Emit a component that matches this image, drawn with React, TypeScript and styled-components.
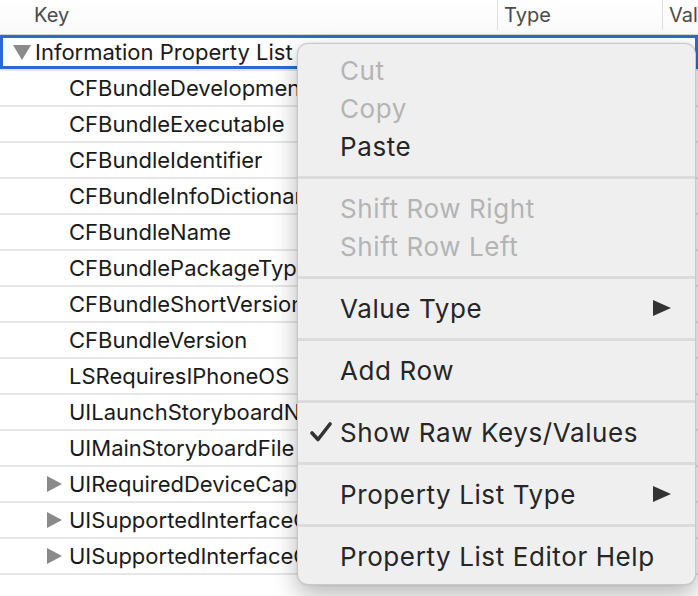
import React from "react";
import styled, { createGlobalStyle } from "styled-components";

const Global = createGlobalStyle`
  html, body {
    margin: 0;
    padding: 0;
    background: #ffffff;
    overflow: hidden;
  }
  body {
    font-family: Inter, "Noto Sans", "Liberation Sans", sans-serif;
  }
`;

const Window = styled.div`
  position: relative;
  width: 698px;
  height: 596px;
  overflow: hidden;
  background: #fff;
`;

const Header = styled.div`
  display: grid;
  grid-template-columns: 497px 165px 1fr;
  height: 34px;
  border-bottom: 1px solid #d6d6d6;
  background: linear-gradient(#ffffff, #fafafa);
`;

const HeaderCell = styled.div<{ $divider?: boolean }>`
  height: 30px;
  display: flex;
  align-items: center;
  padding-left: ${(p) => (p.$divider ? "6px" : "34px")};
  border-left: ${(p) => (p.$divider ? "1px solid #dedede" : "none")};
  font-size: 20px;
  color: #4a4a4a;
  white-space: nowrap;
  overflow: hidden;
`;

const Row = styled.div<{ $selected?: boolean }>`
  display: grid;
  grid-template-columns: 497px 165px 1fr;
  height: 34px;
  border-bottom: 2px solid #e6e6e6;
  box-shadow: ${(p) => (p.$selected ? "inset 0 0 0 3px #2c6ad2" : "none")};
  font-size: 22px;
  color: #1a1a1a;
`;

const KeyCell = styled.div<{ $indent: number }>`
  display: flex;
  align-items: center;
  padding-left: ${(p) => p.$indent}px;
  white-space: nowrap;
  overflow: hidden;
`;

const Cell = styled.div`
  display: flex;
  align-items: center;
  padding-left: 6px;
  white-space: nowrap;
  overflow: hidden;
`;

const Disclosure = styled.span`
  display: inline-flex;
  width: 22px;
  align-items: center;
`;

const Menu = styled.div`
  position: absolute;
  left: 297px;
  top: 43px;
  width: 397px;
  padding: 8px 0;
  background: #efefef;
  border: 1px solid #c9c9c9;
  border-radius: 11px;
  box-shadow: 0 10px 24px rgba(0, 0, 0, 0.28), 0 0 2px rgba(0, 0, 0, 0.15);
`;

const Item = styled.div<{ $disabled?: boolean }>`
  position: relative;
  display: flex;
  align-items: center;
  height: 36px;
  padding-bottom: 2px;
  padding-left: 42px;
  font-size: 26px;
  letter-spacing: 0.6px;
  color: ${(p) => (p.$disabled ? "#b4b4b4" : "#262626")};
  white-space: nowrap;
`;

const Separator = styled.div`
  height: 3px;
  margin: 10px 0 11px;
  background: #dcdcdc;
`;

const Check = styled.svg`
  position: absolute;
  left: 12px;
  top: 8px;
`;

const Arrow = styled.svg`
  position: absolute;
  right: 24px;
  top: 10px;
`;

const Down = () => (
  <svg width="18" height="15" viewBox="0 0 18 15">
    <polygon points="0,0 18,0 9,15" fill="#8a8a8a" />
  </svg>
);

const Right = () => (
  <svg width="15" height="16" viewBox="0 0 15 16">
    <polygon points="0,0 15,8 0,16" fill="#8a8a8a" />
  </svg>
);

type Entry = { key: string; expandable?: boolean };

const entries: Entry[] = [
  { key: "CFBundleDevelopmentRegion" },
  { key: "CFBundleExecutable" },
  { key: "CFBundleIdentifier" },
  { key: "CFBundleInfoDictionaryVersion" },
  { key: "CFBundleName" },
  { key: "CFBundlePackageType" },
  { key: "CFBundleShortVersionString" },
  { key: "CFBundleVersion" },
  { key: "LSRequiresIPhoneOS" },
  { key: "UILaunchStoryboardName" },
  { key: "UIMainStoryboardFile" },
  { key: "UIRequiredDeviceCapabilities", expandable: true },
  { key: "UISupportedInterfaceOrientations", expandable: true },
  { key: "UISupportedInterfaceOrientations~ipad", expandable: true },
];

type MenuEntry =
  | { sep: true }
  | { sep?: false; label: string; disabled?: boolean; checked?: boolean; submenu?: boolean };

const menu: MenuEntry[] = [
  { label: "Cut", disabled: true },
  { label: "Copy", disabled: true },
  { label: "Paste" },
  { sep: true },
  { label: "Shift Row Right", disabled: true },
  { label: "Shift Row Left", disabled: true },
  { sep: true },
  { label: "Value Type", submenu: true },
  { sep: true },
  { label: "Add Row" },
  { sep: true },
  { label: "Show Raw Keys/Values", checked: true },
  { sep: true },
  { label: "Property List Type", submenu: true },
  { sep: true },
  { label: "Property List Editor Help" },
];

const App = () => (
  <Window>
    <Global />
    <Header>
      <HeaderCell>Key</HeaderCell>
      <HeaderCell $divider>Type</HeaderCell>
      <HeaderCell $divider>Val</HeaderCell>
    </Header>
    <Row $selected>
      <KeyCell $indent={13}>
        <Disclosure>
          <Down />
        </Disclosure>
        Information Property List
      </KeyCell>
      <Cell>Dictionary</Cell>
      <Cell />
    </Row>
    {entries.map((e, idx) => (
      <Row key={idx}>
        <KeyCell $indent={e.expandable ? 47 : 69}>
          {e.expandable && (
            <Disclosure>
              <Right />
            </Disclosure>
          )}
          {e.key}
        </KeyCell>
        <Cell />
        <Cell />
      </Row>
    ))}

    <Menu>
      {menu.map((m, idx) =>
        m.sep ? (
          <Separator key={idx} />
        ) : (
          <Item key={idx} $disabled={m.disabled}>
            {m.checked && (
              <Check width="22" height="20" viewBox="0 0 22 20">
                <path
                  d="M2 11 L8 17.5 L20 2"
                  fill="none"
                  stroke="#333"
                  strokeWidth="3.6"
                  strokeLinecap="round"
                  strokeLinejoin="round"
                />
              </Check>
            )}
            {m.label}
            {m.submenu && (
              <Arrow width="18" height="16" viewBox="0 0 18 16">
                <polygon points="0,0 18,8 0,16" fill="#333" />
              </Arrow>
            )}
          </Item>
        )
      )}
    </Menu>
  </Window>
);

export default App;
